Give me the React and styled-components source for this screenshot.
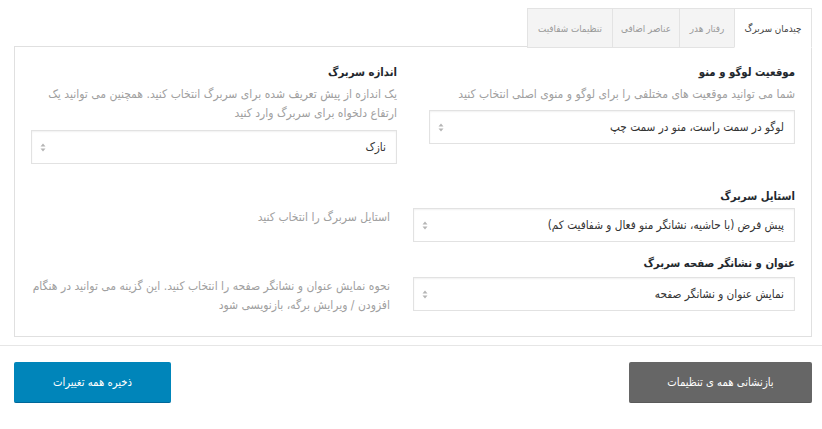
import React from "react";
import styled, { createGlobalStyle } from "styled-components";

const Global = createGlobalStyle`
  html, body { margin: 0; padding: 0; background: #fff; }
  body { font-family: "DejaVu Sans Condensed", "DejaVu Sans", sans-serif; }
  * { box-sizing: border-box; }
`;

const Page = styled.div`
  direction: rtl;
  width: 822px;
  padding-top: 8px;
`;

const Wrap = styled.div`
  padding: 0 10px 0 14px;
`;

const TabBar = styled.div`
  display: flex;
  height: 39px;
  position: relative;
  z-index: 1;
  margin-bottom: -1px;
`;

const Tab = styled.div`
  display: flex;
  align-items: center;
  justify-content: center;
  height: 40px;
  width: ${(p) => p.$w}px;
  font-size: 9.8px;
  color: ${(p) => (p.$active ? "#444" : "#9a9a9a")};
  background: ${(p) => (p.$active ? "#fff" : "#f4f4f4")};
  border: 1px solid #e3e3e3;
  border-right-width: ${(p) => (p.$first ? "1px" : "0")};
  border-bottom-color: ${(p) => (p.$active ? "#fff" : "#e3e3e3")};
  white-space: nowrap;
`;

const Panel = styled.div`
  border: 1px solid #e0e0e0;
  padding: 16px 16px 21px;
`;

const TopGrid = styled.div`
  display: grid;
  grid-template-columns: minmax(0, 1fr) minmax(0, 1fr);
  column-gap: 32px;
  align-items: start;
  margin-bottom: 22px;
`;

const Field = styled.div`
  display: flex;
  flex-direction: column;
`;

const Heading = styled.div`
  font-size: 11.3px;
  font-weight: bold;
  line-height: 20px;
  color: #23282d;
  padding-top: ${(p) => p.$pt ?? 0}px;
  margin-bottom: ${(p) => p.$mb ?? 2}px;
`;

const Desc = styled.div`
  font-size: 12px;
  line-height: 19px;
  color: #a0a0a0;
  margin-bottom: ${(p) => p.$mb ?? 0}px;
  white-space: nowrap;
`;

const SelectBox = styled.div`
  display: flex;
  align-items: center;
  justify-content: space-between;
  height: 34px;
  width: ${(p) => (p.$w ? `${p.$w}px` : "100%")};
  flex-shrink: 0;
  border: 1px solid #e2e2e2;
  box-shadow: inset 0 1px 2px rgba(0, 0, 0, 0.06);
  background: #fff;
  padding: 0 10px 0 8px;
  font-size: 11.7px;
  color: #333;
`;

const Arrows = styled.svg`
  width: 6px;
  height: 9px;
  flex-shrink: 0;
`;

const InlineRow = styled.div`
  display: flex;
  align-items: flex-start;
  gap: 23px;
`;

const Section = styled.div`
  margin-bottom: ${(p) => p.$mb ?? 0}px;
`;

const Footer = styled.div`
  margin-top: 8px;
  border-top: 1px solid #e6e6e6;
  padding: 16px 10px 0 14px;
  display: flex;
  justify-content: space-between;
`;

const Button = styled.button`
  height: 41px;
  width: ${(p) => p.$w}px;
  border: none;
  border-radius: 2px;
  background: ${(p) => p.$bg};
  border-bottom: 1px solid ${(p) => p.$edge};
  color: #fff;
  font-family: "DejaVu Sans Condensed", "DejaVu Sans", sans-serif;
  font-size: 11.2px;
  direction: rtl;
  cursor: pointer;
`;

function Select({ value, w }) {
  return (
    <SelectBox $w={w}>
      <span>{value}</span>
      <Arrows viewBox="0 0 6 9">
        <path d="M3 0.5 L5.5 3.5 H0.5 Z" fill="#b5b5b5" />
        <path d="M3 8.5 L5.5 5.5 H0.5 Z" fill="#b5b5b5" />
      </Arrows>
    </SelectBox>
  );
}

const tabs = [
  { label: "چیدمان سربرگ", active: true, w: 78 },
  { label: "رفتار هدر", w: 55 },
  { label: "عناصر اضافی", w: 67 },
  { label: "تنظیمات شفافیت", w: 85 },
];

export default function App() {
  return (
    <>
      <Global />
      <Page>
        <Wrap>
          <TabBar>
            {tabs.map((t, i) => (
              <Tab key={t.label} $active={t.active} $first={i === 0} $w={t.w}>
                {t.label}
              </Tab>
            ))}
          </TabBar>
          <Panel>
            <TopGrid>
              <Field>
                <Heading>موقعیت لوگو و منو</Heading>
                <Desc $mb={6}>
                  شما می توانید موقعیت های مختلفی را برای لوگو و منوی اصلی انتخاب کنید
                </Desc>
                <Select value="لوگو در سمت راست، منو در سمت چپ" />
              </Field>
              <Field>
                <Heading>اندازه سربرگ</Heading>
                <Desc $mb={7}>
                  یک اندازه از پیش تعریف شده برای سربرگ انتخاب کنید. همچنین می توانید یک
                  <br />
                  ارتفاع دلخواه برای سربرگ وارد کنید
                </Desc>
                <Select value="نازک" />
              </Field>
            </TopGrid>
            <Section $mb={12}>
              <Heading $pt={1} $mb={1}>استایل سربرگ</Heading>
              <InlineRow>
                <Select w={382} value="پیش فرض (با حاشیه، نشانگر منو فعال و شفافیت کم)" />
                <Desc>استایل سربرگ را انتخاب کنید</Desc>
              </InlineRow>
            </Section>
            <Section>
              <Heading $mb={3}>عنوان و نشانگر صفحه سربرگ</Heading>
              <InlineRow>
                <Select w={382} value="نمایش عنوان و نشانگر صفحه" />
                <Desc>
                  نحوه نمایش عنوان و نشانگر صفحه را انتخاب کنید. این گزینه می توانید در هنگام
                  <br />
                  افزودن / ویرایش برگه، بازنویسی شود
                </Desc>
              </InlineRow>
            </Section>
          </Panel>
        </Wrap>
        <Footer>
          <Button $w={183} $bg="#666" $edge="#5a5a5a">
            بازنشانی همه ی تنظیمات
          </Button>
          <Button $w={157} $bg="#0085ba" $edge="#006799">
            ذخیره همه تغییرات
          </Button>
        </Footer>
      </Page>
    </>
  );
}
